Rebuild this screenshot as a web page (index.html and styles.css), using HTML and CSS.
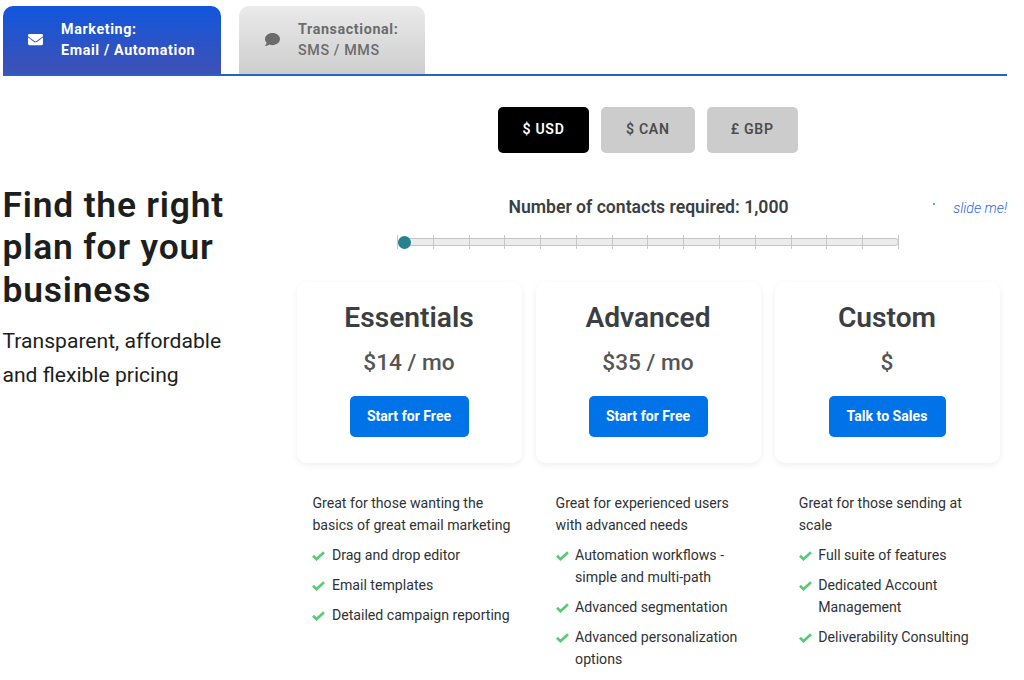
FILE: index.html
```html
<!DOCTYPE html>
<html lang="en">
<head>
<meta charset="utf-8">
<title>Pricing</title>
<link rel="stylesheet" href="styles.css">
</head>
<body>
<nav class="tabs">
  <a class="tab tab-active">
    <svg class="tab-icon" viewBox="0 0 512 512"><path fill="currentColor" d="M502.3 190.8c3.9-3.1 9.7-.2 9.7 4.7V400c0 26.500-21.500 48-48 48H48c-26.500 0-48-21.500-48-48V195.600c0-5 5.700-7.800 9.700-4.700 22.400 17.400 52.100 39.500 154.100 113.600 21.100 15.400 56.700 47.800 92.200 47.600 35.700.3 72-32.800 92.300-47.600 102-74.100 131.600-96.300 154-113.700zM256 320c23.200.4 56.600-29.200 73.400-41.400 132.700-96.300 142.800-104.700 173.400-128.700 5.800-4.500 9.200-11.500 9.200-18.900v-19c0-26.500-21.500-48-48-48H48c-26.500 0-48 21.500-48 48v19c0 7.400 3.400 14.300 9.200 18.900 30.600 23.900 40.700 32.400 173.400 128.700 16.800 12.200 50.200 41.800 73.400 41.400z"/></svg>
    <span class="tab-label"><b>Marketing:</b><br><span>Email / Automation</span></span>
  </a>
  <a class="tab tab-idle">
    <svg class="tab-icon" viewBox="0 0 512 512"><path fill="currentColor" d="M256 32C114.600 32 0 125.100 0 240c0 49.600 21.400 95 57 130.700C44.500 421.100 2.700 466 2.200 466.500c-2.200 2.300-2.800 5.700-1.500 8.700S4.800 480 8 480c66.300 0 116-31.800 140.600-51.400 32.700 12.300 69 19.400 107.400 19.400 141.400 0 256-93.100 256-208S397.400 32 256 32z"/></svg>
    <span class="tab-label"><b>Transactional:</b><br><span>SMS / MMS</span></span>
  </a>
</nav>
<main class="main">
  <section class="intro">
    <h1>Find the right<br>plan for your<br>business</h1>
    <p>Transparent, affordable<br>and flexible pricing</p>
  </section>
  <section class="pricing">
    <div class="currencies">
      <button class="cur cur-usd">$ USD</button>
      <button class="cur cur-can">$ CAN</button>
      <button class="cur cur-gbp">£ GBP</button>
    </div>
    <div class="contacts">
      <h2>Number of contacts required: 1,000</h2>
      <span class="hint"><i class="dot"></i><em>slide me!</em></span>
    </div>
    <div class="slider">
      <div class="track"></div>
      <div class="ticks"><i></i><i></i><i></i><i></i><i></i><i></i><i></i><i></i><i></i><i></i><i></i><i></i><i></i><i></i><i></i></div>
      <div class="thumb"></div>
    </div>
    <div class="cards">
      <article class="card"><h3>Essentials</h3><p class="price">$14 / mo</p><a class="cta">Start for Free</a></article>
      <article class="card"><h3>Advanced</h3><p class="price">$35 / mo</p><a class="cta">Start for Free</a></article>
      <article class="card"><h3>Custom</h3><p class="price">$</p><a class="cta cta-sales">Talk to Sales</a></article>
    </div>
    <div class="features">
      <div class="feature">
        <p>Great for those wanting the<br>basics of great email marketing</p>
        <ul>
          <li><svg class="check" viewBox="0 0 13 10"><path d="M1 4.800 4.500 8.200 12 1.200"/></svg><span>Drag and drop editor</span></li>
          <li><svg class="check" viewBox="0 0 13 10"><path d="M1 4.800 4.500 8.200 12 1.200"/></svg><span>Email templates</span></li>
          <li><svg class="check" viewBox="0 0 13 10"><path d="M1 4.800 4.500 8.200 12 1.200"/></svg><span>Detailed campaign reporting</span></li>
        </ul>
      </div>
      <div class="feature">
        <p>Great for experienced users<br>with advanced needs</p>
        <ul>
          <li><svg class="check" viewBox="0 0 13 10"><path d="M1 4.800 4.500 8.200 12 1.200"/></svg><span>Automation workflows -<br>simple and multi-path</span></li>
          <li><svg class="check" viewBox="0 0 13 10"><path d="M1 4.800 4.500 8.200 12 1.200"/></svg><span>Advanced segmentation</span></li>
          <li><svg class="check" viewBox="0 0 13 10"><path d="M1 4.800 4.500 8.200 12 1.200"/></svg><span>Advanced personalization<br>options</span></li>
        </ul>
      </div>
      <div class="feature">
        <p>Great for those sending at<br>scale</p>
        <ul>
          <li><svg class="check" viewBox="0 0 13 10"><path d="M1 4.800 4.500 8.200 12 1.200"/></svg><span>Full suite of features</span></li>
          <li><svg class="check" viewBox="0 0 13 10"><path d="M1 4.800 4.500 8.200 12 1.200"/></svg><span>Dedicated Account<br>Management</span></li>
          <li><svg class="check" viewBox="0 0 13 10"><path d="M1 4.800 4.500 8.200 12 1.200"/></svg><span>Deliverability Consulting</span></li>
        </ul>
      </div>
    </div>
  </section>
</main>
</body>
</html>
```
FILE: styles.css
```css
* { box-sizing: border-box; }
body { margin: 0; height: 680px; overflow: hidden; background: #fff; color: #212529; font-family: Roboto, sans-serif; white-space: nowrap; }
h1, h2, h3, p, ul { margin: 0; padding: 0; font-weight: 500; }
.tabs { display: flex; gap: 17.500px; width: 1004.500px; height: 70.500px; margin: 5.500px 0 0 2.500px; border-bottom: 2px solid #2463c8; }
.tab { display: flex; height: 68.500px; border-radius: 10px 10px 0 0; padding-left: 25.500px; }
.tab-active { width: 218.500px; color: #fff; background: linear-gradient(#1156dc, #3f51b5); }
.tab-idle { width: 186px; color: #6c6c6c; background: linear-gradient(#eaeaea, #cecece); padding-left: 26.500px; }
.tab-icon { width: 15px; height: 15px; margin: 26.500px 18px 0 0; flex: none; }
.tab-label { font-size: 14.300px; line-height: 21px; letter-spacing: .62px; padding-top: 13px; font-weight: 500; }
.tab-label b { font-weight: 700; }
.tab-active .tab-label { font-weight: 700; }
.main { display: flex; }
.intro { width: 290px; padding: 108px 0 0 2.500px; color: #1c1e20; }
.intro h1 { font-size: 35.400px; line-height: 42.400px; letter-spacing: .8px; font-weight: 600; }
.intro p { font-size: 21.100px; line-height: 34.200px; font-weight: 400; margin-top: 12.500px; }
.pricing { width: 717px; padding-top: 30.500px; }
.currencies { display: flex; gap: 12px; margin-left: 208px; }
.cur { height: 46px; border: 0; border-radius: 5px; padding: 0 0 1px; font: 600 14.100px Roboto, sans-serif; letter-spacing: .7px; background: #ccc; color: #4c4c4c; }
.cur-usd { width: 91px; background: #000; color: #fff; }
.cur-can { width: 93.500px; }
.cur-gbp { width: 91.500px; }
.contacts { display: grid; grid-template-columns: 1fr auto 1fr; align-items: center; height: 24px; margin-top: 42.500px; }
.contacts h2 { grid-column: 2; font-size: 17.600px; line-height: 24px; color: #3b3e42; font-weight: 600; }
.hint { display: flex; justify-content: flex-end; padding-top: 2px; font-size: 14.200px; font-weight: 300; color: #2b66e0; }
.dot { width: 2px; height: 2px; background: #6d9bee; margin: 3px 18px 0 0; }
.slider { position: relative; width: 502px; height: 14px; margin: 16px 0 0 107px; padding-top: 3px; }
.track { height: 8px; margin: 0 .5px; border: 1px solid #c4c4c4; border-radius: 4px; background: #ececec; }
.ticks { position: absolute; inset: 0; display: flex; justify-content: space-between; }
.ticks i { width: 1px; height: 14px; background: #c6c6c6; }
.thumb { position: absolute; left: .5px; top: .5px; width: 13px; height: 13px; border-radius: 50%; background: #26828f; }
.cards { display: grid; grid-template-columns: repeat(3, 225px); gap: 14px; margin: 33px 0 0 6.500px; }
.card { height: 181px; border-radius: 10px; box-shadow: 0 2px 6px rgba(0,0,0,.07); text-align: center; padding-top: 18px; }
.card h3 { font-size: 28.150px; line-height: 36px; color: #3b3e42; font-weight: 600; }
.card .price { font-size: 22.700px; line-height: 30px; margin: 12px 0 18px; color: #555; }
.cta { display: inline-block; width: 119px; height: 41px; line-height: 40px; border-radius: 5px; background: #0073e9; color: #fff; font-size: 14.100px; font-weight: 700; }
.cta-sales { width: 117px; }
.features { display: grid; grid-template-columns: repeat(3, 243.200px); margin: 29px 0 0 22.400px; font-size: 14.130px; line-height: 22.300px; color: #2f3235; }
.feature p { font-weight: 400; }
.feature ul { list-style: none; font-weight: 400; }
.feature li { display: flex; margin-top: 7.500px; }
.check { flex: none; width: 13px; height: 10px; margin: 7.200px 6.500px 0 0; }
.check path { fill: none; stroke: #5bca78; stroke-width: 2.700; }
```
